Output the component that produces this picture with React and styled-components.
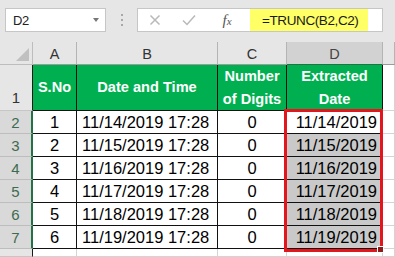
import React from 'react';
import styled, { createGlobalStyle } from 'styled-components';

const Global = createGlobalStyle`
  html, body { margin: 0; padding: 0; background: #fff; }
  body { width: 395px; height: 257px; overflow: hidden; font-family: "Liberation Sans", Arial, sans-serif; }
`;

const Page = styled.div`
  width: 395px;
  height: 257px;
  display: flex;
  flex-direction: column;
  background: #e6e6e6;
  overflow: hidden;
`;

const Toolbar = styled.div`
  flex: none;
  height: 42px;
  box-sizing: border-box;
  padding: 8px 0 0 5px;
  display: flex;
  align-items: flex-start;
  background: #e6e6e6;
`;

const NameBox = styled.div`
  width: 101px;
  height: 24px;
  box-sizing: border-box;
  border: 1px solid #c6c6c6;
  background: #fff;
  display: flex;
  align-items: center;
  justify-content: space-between;
  padding: 0 6px 0 7px;
  font-size: 13px;
  letter-spacing: -0.3px;
  color: #222;
`;

const Caret = styled.span`
  width: 0;
  height: 0;
  border-left: 3.5px solid transparent;
  border-right: 3.5px solid transparent;
  border-top: 4px solid #777;
`;

const Dots = styled.div`
  width: 31px;
  height: 24px;
  display: flex;
  flex-direction: column;
  align-items: center;
  justify-content: center;
  gap: 3px;
`;

const Dot = styled.span`
  width: 2px;
  height: 2px;
  background: #a8a8a8;
`;

const FormulaBox = styled.div`
  width: 246px;
  height: 24px;
  box-sizing: border-box;
  border: 1px solid #c6c6c6;
  background: #fff;
  display: flex;
  align-items: stretch;
`;

const IconCell = styled.div`
  width: ${p => p.$w}px;
  display: flex;
  align-items: center;
  justify-content: center;
  flex: none;
`;

const Fx = styled.span`
  font-family: "Liberation Serif", serif;
  font-style: italic;
  color: #555;
  font-size: 15px;
  & > small { font-size: 11px; }
`;

const FormulaInput = styled.div`
  margin-left: 2px;
  width: 118px;
  background: #ffff66;
  box-sizing: border-box;
  padding-left: 12px;
  display: flex;
  align-items: center;
  font-size: 13.5px;
  letter-spacing: -0.4px;
  color: #1a1a1a;
`;

const Sheet = styled.div`
  flex: 1;
  position: relative;
  display: grid;
  grid-template-columns: 33px 44px 141px 69px 96px 12px;
  grid-template-rows: 23px 46px repeat(6, 23px) 1fr;
  background: #fff;
`;

const Corner = styled.div`
  background: #e6e6e6;
  border-right: 1px solid #bdbdbd;
  border-bottom: 1px solid #bdbdbd;
  display: flex;
  align-items: flex-end;
  justify-content: flex-end;
  padding: 0 3px 3px 0;
  &::after {
    content: "";
    width: 0;
    height: 0;
    border-left: 13px solid transparent;
    border-bottom: 13px solid #c0c0c0;
  }
`;

const ColHead = styled.div`
  background: ${p => (p.$sel ? '#d2d2d2' : '#e6e6e6')};
  border-right: 1px solid #b4b4b4;
  border-bottom: 1px solid ${p => (p.$sel ? '#217346' : '#9b9b9b')};
  display: flex;
  align-items: center;
  justify-content: center;
  font-size: 14.5px;
  color: ${p => (p.$sel ? '#444' : '#333')};
  padding-top: 1px;
`;

const RowHead = styled.div`
  background: ${p => (p.$sel ? '#d9d9d9' : '#e6e6e6')};
  border-bottom: 1px solid ${p => (p.$sel ? '#bdbdbd' : '#c6c6c6')};
  border-right: ${p => (p.$sel ? '2px solid #217346' : '1px solid #1a1a1a')};
  display: flex;
  align-items: ${p => (p.$bottom ? 'flex-end' : 'center')};
  justify-content: center;
  padding-bottom: ${p => (p.$bottom ? '4px' : '0')};
  box-sizing: border-box;
  font-size: 15px;
  color: ${p => (p.$sel ? '#3d6b50' : '#333')};
`;

const HeadCell = styled.div`
  background: #00b050;
  color: #fff;
  font-weight: bold;
  font-size: 14.6px;
  line-height: 23px;
  text-align: center;
  display: flex;
  align-items: center;
  justify-content: center;
  border-right: 1px solid #111;
  border-bottom: 1px solid #111;
`;

const Cell = styled.div`
  background: ${p => (p.$shade ? '#c9c9c9' : '#fff')};
  border-right: 1px solid #111;
  border-bottom: 1px solid #111;
  display: flex;
  align-items: center;
  justify-content: ${p => (p.$align === 'left' ? 'flex-start' : p.$align === 'right' ? 'flex-end' : 'center')};
  padding: 0 5px;
  font-size: 16.5px;
  color: #000;
  white-space: nowrap;
  overflow: hidden;
`;

const EmptyCell = styled.div`
  background: #fff;
  border-right: 1px solid #d4d4d4;
  border-bottom: 1px solid #d4d4d4;
`;

const Selection = styled.div`
  position: absolute;
  left: 284px;
  top: 67px;
  width: 99px;
  height: 143px;
  box-sizing: border-box;
  border: 3px solid #e3161d;
  pointer-events: none;
  z-index: 2;
`;

const FillHandle = styled.span`
  position: absolute;
  right: -4px;
  bottom: -4px;
  width: 5px;
  height: 5px;
  background: #8e1a1a;
  border: 1px solid #fff;
`;

const rows = [
  ['1', '11/14/2019 17:28', '0', '11/14/2019'],
  ['2', '11/15/2019 17:28', '0', '11/15/2019'],
  ['3', '11/16/2019 17:28', '0', '11/16/2019'],
  ['4', '11/17/2019 17:28', '0', '11/17/2019'],
  ['5', '11/18/2019 17:28', '0', '11/18/2019'],
  ['6', '11/19/2019 17:28', '0', '11/19/2019'],
];

export default function App() {
  return (
    <>
      <Global />
      <Page>
        <Toolbar>
          <NameBox>
            <span>D2</span>
            <Caret />
          </NameBox>
          <Dots>
            <Dot />
            <Dot />
            <Dot />
          </Dots>
          <FormulaBox>
            <IconCell $w={34}>
              <svg width="12" height="12" viewBox="0 0 12 12">
                <path d="M1.5 1.5 L10.5 10.5 M10.5 1.5 L1.5 10.5" stroke="#b9b9b9" strokeWidth="1.5" fill="none" />
              </svg>
            </IconCell>
            <IconCell $w={34}>
              <svg width="14" height="12" viewBox="0 0 14 12">
                <path d="M1 6.5 L5 10.5 L13 1.5" stroke="#b9b9b9" strokeWidth="1.5" fill="none" />
              </svg>
            </IconCell>
            <IconCell $w={42}>
              <Fx>f<small>x</small></Fx>
            </IconCell>
            <FormulaInput>=TRUNC(B2,C2)</FormulaInput>
          </FormulaBox>
        </Toolbar>
        <Sheet>
          <Corner />
          <ColHead>A</ColHead>
          <ColHead>B</ColHead>
          <ColHead>C</ColHead>
          <ColHead $sel>D</ColHead>
          <ColHead />

          <RowHead $bottom>1</RowHead>
          <HeadCell>S.No</HeadCell>
          <HeadCell>Date and Time</HeadCell>
          <HeadCell>Number<br />of Digits</HeadCell>
          <HeadCell>Extracted<br />Date</HeadCell>
          <EmptyCell />

          {rows.map((r, i) => (
            <React.Fragment key={i}>
              <RowHead $sel>{i + 2}</RowHead>
              <Cell>{r[0]}</Cell>
              <Cell $align="left">{r[1]}</Cell>
              <Cell>{r[2]}</Cell>
              <Cell $align="right" $shade={i > 0}>{r[3]}</Cell>
              <EmptyCell />
            </React.Fragment>
          ))}

          <RowHead />
          <EmptyCell />
          <EmptyCell />
          <EmptyCell />
          <EmptyCell />
          <EmptyCell />

          <Selection>
            <FillHandle />
          </Selection>
        </Sheet>
      </Page>
    </>
  );
}
